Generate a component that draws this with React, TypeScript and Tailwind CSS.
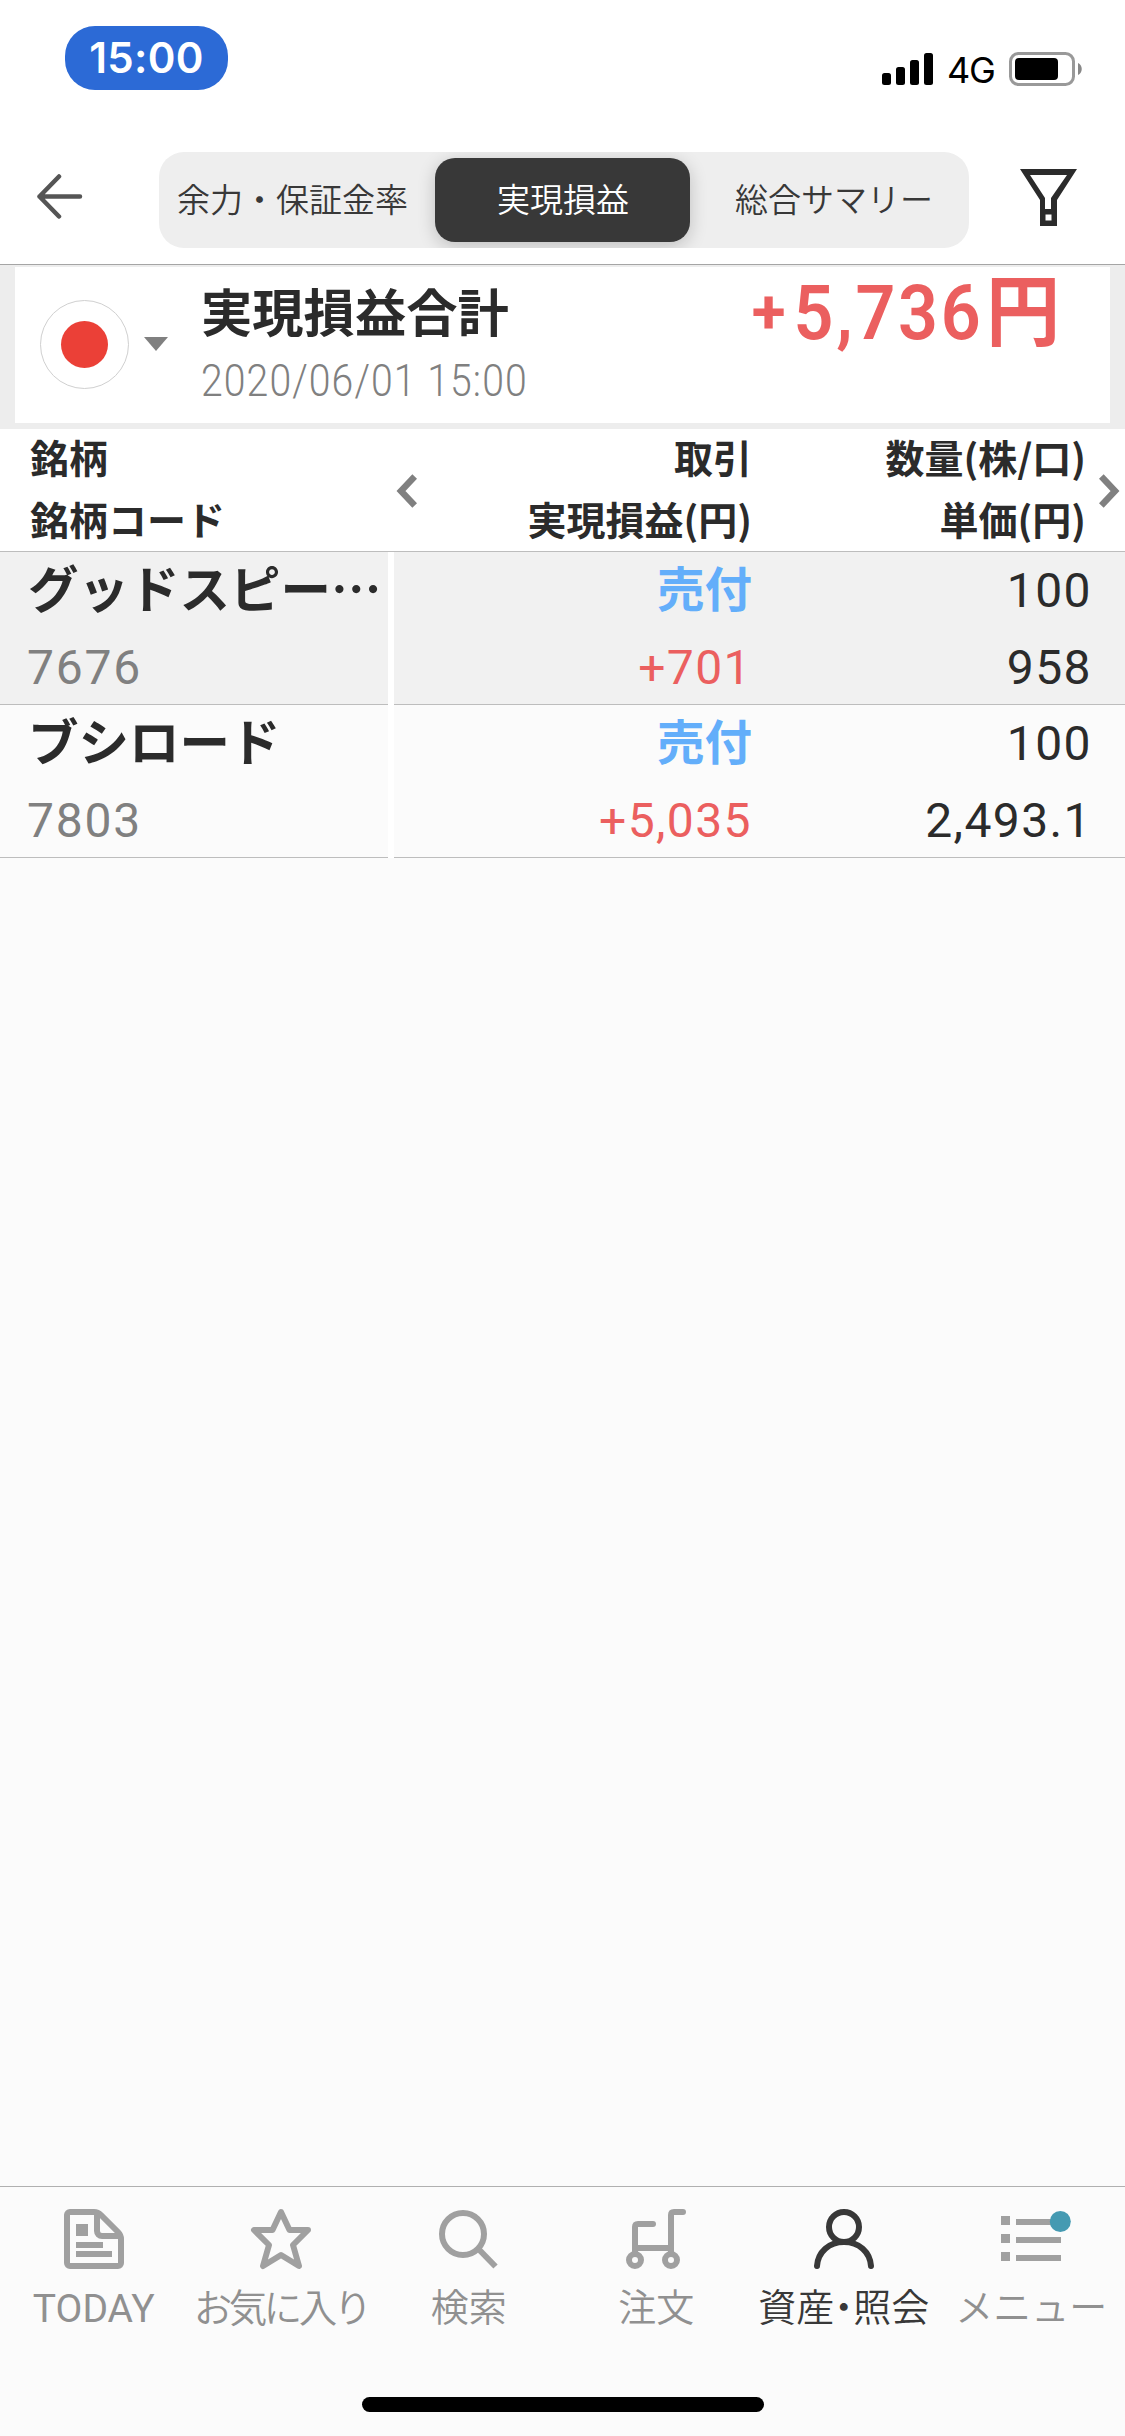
import type { ReactNode } from "react";

type Trade = {
  name: string;
  code: string;
  side: string;
  profit: string;
  quantity: string;
  price: string;
};

const trades: Trade[] = [
  { name: "グッドスピー…", code: "7676", side: "売付", profit: "+701", quantity: "100", price: "958" },
  { name: "ブシロード", code: "7803", side: "売付", profit: "+5,035", quantity: "100", price: "2,493.1" },
];

function StatusBar() {
  return (
    <div className="flex h-[152px] shrink-0 items-start justify-between pl-[65px] pr-[43px]">
      <div className="mt-[26px] flex h-16 w-[163px] items-center justify-center rounded-[30px] bg-[#2c6ad6] font-['Inter'] text-[42px] font-[560] leading-none tracking-[0.3px] text-white">
        15:00
      </div>
      <div className="mt-[52px] flex items-start">
        <svg width="52" height="34" viewBox="0 0 52 34" className="mr-[13px]">
          <rect x="0" y="21" width="9" height="12" rx="2.5" />
          <rect x="14" y="15" width="9" height="18" rx="2.5" />
          <rect x="28" y="8" width="9" height="25" rx="2.5" />
          <rect x="42" y="1" width="9" height="32" rx="2.5" />
        </svg>
        <span className="w-[62px] font-['Inter'] text-[36px] leading-[36px] tracking-[-1.2px] text-black">4G</span>
        <svg width="73" height="34" viewBox="0 0 73 34">
          <rect x="1.5" y="1.5" width="63" height="31" rx="8" fill="none" stroke="#999" strokeWidth="3" />
          <rect x="6" y="6" width="43" height="22" rx="4" />
          <path d="M69 11c5 2 5 10 0 12z" fill="#888" />
        </svg>
      </div>
    </div>
  );
}

function Toolbar() {
  return (
    <div className="flex h-[112px] shrink-0 items-start pl-[37px]">
      <svg width="46" height="46" viewBox="0 0 46 46" className="mt-[21px]" fill="none" stroke="#555" strokeWidth="4.5" strokeLinecap="round" strokeLinejoin="round">
        <path d="M22 3.500 2.500 23.500l19.500 20M2.500 23.500h40.500" />
      </svg>
      <div className="ml-[76px] flex h-24 w-[810px] items-center overflow-hidden rounded-[25px] bg-[#eee] text-[33px] font-[350] text-[#383838]">
        <div className="w-[276px] pb-1 pl-[18px] leading-none">余力・保証金率</div>
        <div className="flex h-[84px] w-[255px] items-center justify-center rounded-[20px] bg-[#383838] pb-1 pl-px leading-none text-white shadow-[0_4px_18px_rgba(0,0,0,0.2)]">
          実現損益
        </div>
        <div className="pb-1 pl-[45px] leading-none">総合サマリー</div>
      </div>
      <svg width="58" height="58" viewBox="0 0 58 58" className="ml-[51px] mt-[17px]" fill="#2b2b2b">
        <path fillRule="evenodd" d="M0 0H57L37 31V57H20V31ZM10 6 25 29V40H31V29L47 6ZM25.500 45.500V51.500H31.500V45.500Z" />
      </svg>
    </div>
  );
}

function Summary() {
  return (
    <div className="h-[165px] shrink-0 border-t border-[#a5a5a5] bg-[#ededed] px-[15px] pt-[2px]">
      <div className="flex h-[156px] bg-white pl-[25px]">
        <div className="mt-[33px] flex size-[89px] items-center justify-center rounded-full border border-[#d0d0d0]">
          <div className="size-[47px] rounded-full bg-[#eb4037]" />
        </div>
        <svg width="24" height="14" viewBox="0 0 24 14" className="ml-[15px] mt-[70px]">
          <path d="M0 0h24L12 14z" fill="#808080" />
        </svg>
        <div className="ml-[33px] w-[400px]">
          <div className="mt-[17px] text-[51.300px] font-bold leading-[52px]">実現損益合計</div>
          <div className="mt-[24px] origin-left scale-x-[0.9] whitespace-nowrap font-['Roboto'] text-[43.5px] font-light leading-[44px] tracking-[1.2px] text-[#808080]">
            2020/06/01 15:00
          </div>
        </div>
        <div className="ml-auto mr-[50px] flex items-start text-[#eb5f5f]">
          <span className="mt-[7px] font-['Roboto'] text-[62px] font-bold leading-[76px]">+</span>
          <span className="ml-[-8px] mt-[8px] origin-right scale-x-[0.92] font-['Roboto'] text-[76px] font-semibold leading-[76px] tracking-[3px]">5,736</span>
          <span className="ml-[-2px] mt-px origin-right scale-x-[0.95] text-[78px] font-bold leading-[77px]">円</span>
        </div>
      </div>
    </div>
  );
}

function Chevron({ right = false }: { right?: boolean }) {
  return (
    <svg width="21" height="34" viewBox="0 0 21 34" fill="none" stroke="#808080" strokeWidth="6.500" className="mt-[45px] shrink-0">
      {right ? <path d="M2.300 2.500 16 17 2.300 31.500" /> : <path d="M18.700 2.500 5 17 18.700 31.500" />}
    </svg>
  );
}

function TableHeader() {
  return (
    <div className="h-[123px] shrink-0 border-b border-[#bdbdbd] bg-white">
      <div className="flex text-[39px] font-bold leading-[62px] whitespace-nowrap">
        <div className="mt-[-4px] w-[396px] pl-[30px]">
          <div>銘柄</div>
          <div>銘柄コード</div>
        </div>
        <Chevron />
        <div className="mt-[-4px] w-[335px] text-right">
          <div>取引</div>
          <div>実現損益(円)</div>
        </div>
        <div className="mt-[-4px] w-[334px] text-right">
          <div>数量(株/口)</div>
          <div>単価(円)</div>
        </div>
        <div className="ml-[13px]">
          <Chevron right />
        </div>
      </div>
    </div>
  );
}

function TradeRow({ trade, shaded }: { trade: Trade; shaded: boolean }) {
  const cell = shaded ? "bg-[#f1f1f1]" : "bg-[#fbfbfb]";
  return (
    <div className="flex h-[153px] shrink-0 gap-[6px] bg-white whitespace-nowrap">
      <div className={`w-[388px] border-b border-[#bdbdbd] ${cell}`}>
        <div className="mt-[-2px] pl-[28px] text-[50.500px] font-bold leading-[72px]">{trade.name}</div>
        <div className="mt-[10px] pl-[27px] font-['Roboto'] text-[48px] leading-[72px] tracking-[1.8px] text-[#808080]">{trade.code}</div>
      </div>
      <div className={`flex flex-1 border-b border-[#bdbdbd] ${cell}`}>
        <div className="w-[358px] text-right">
          <div className="mt-[-3px] text-[47.500px] font-bold leading-[76px] text-[#63aefa]">{trade.side}</div>
          <div className="mt-[7px] font-['Roboto'] text-[48px] leading-[72px] tracking-[1.4px] text-[#eb5f5f]">{trade.profit}</div>
        </div>
        <div className="w-[340px] pt-[3px] text-right font-['Roboto'] text-[48px] leading-[72px] tracking-[1.4px]">
          <div>{trade.quantity}</div>
          <div className="mt-[5px]">{trade.price}</div>
        </div>
      </div>
    </div>
  );
}

function IconFrame({ children }: { children: ReactNode }) {
  return (
    <svg width="72" height="62" viewBox="-6 -1 72 62" fill="none" stroke="currentColor" strokeWidth="6" className="overflow-visible">
      {children}
    </svg>
  );
}

function TodayIcon() {
  return (
    <IconFrame>
      <path d="M30 3H6a3 3 0 0 0-3 3v48a3 3 0 0 0 3 3h48a3 3 0 0 0 3-3V30q0-4-3-7L37 6q-3-3-7-3z" />
      <path d="M33 4v18a5 5 0 0 0 5 5h18" />
      <path d="M12 15h12v12H12zM12 33h27v6H12zM12 42h36v6H12z" fill="currentColor" stroke="none" />
    </IconFrame>
  );
}

function StarIcon() {
  return (
    <IconFrame>
      <path strokeLinejoin="round" d="M30 3 38.500 21H57L42 36l6 21-18-11-18 11 6-21L3 21h18.500z" />
    </IconFrame>
  );
}

function SearchIcon() {
  return (
    <IconFrame>
      <circle cx="24" cy="25" r="21" />
      <path d="m39 39.500 17.500 18" />
    </IconFrame>
  );
}

function CartIcon() {
  return (
    <IconFrame>
      <circle cx="9" cy="51" r="6" />
      <circle cx="45" cy="51" r="6" />
      <path strokeLinecap="round" d="M27 15H12q-3 0-3 3v25M57 3h-9q-3 0-3 3v37M9 39h36" />
    </IconFrame>
  );
}

function PersonIcon() {
  return (
    <IconFrame>
      <circle cx="30" cy="18" r="15" />
      <path strokeLinecap="round" d="M3 57C4 43 15 33 30 33s26 10 27 24" />
    </IconFrame>
  );
}

function MenuIcon() {
  return (
    <IconFrame>
      <path d="M0 7h9v9H0zM0 25h9v9H0zM0 43h9v9H0zM15 10h45v6H15zM15 28h45v6H15zM15 46h45v6H15z" fill="currentColor" stroke="none" />
      <circle cx="59.300" cy="12.500" r="10.500" fill="#459ab2" stroke="none" />
    </IconFrame>
  );
}

const tabs: { label: string; icon: ReactNode; labelClass: string; active?: boolean }[] = [
  { label: "TODAY", icon: <TodayIcon />, labelClass: "mt-[19px] font-['Roboto'] text-[39px] font-normal" },
  { label: "お気に入り", icon: <StarIcon />, labelClass: "mt-[15px] text-[38.500px] tracking-[-3.5px] font-[350]" },
  { label: "検索", icon: <SearchIcon />, labelClass: "mt-[15px] text-[38px] font-[350]" },
  { label: "注文", icon: <CartIcon />, labelClass: "mt-[15px] text-[38px] font-[350]" },
  { label: "資産・照会", icon: <PersonIcon />, labelClass: "mt-[15px] text-[38px] font-[350] [font-feature-settings:'palt']", active: true },
  { label: "メニュー", icon: <MenuIcon />, labelClass: "mt-[15px] text-[38px] font-[350]" },
];

function TabBar() {
  return (
    <div className="shrink-0 border-t border-[#b0b0b0] bg-[#fbfbfb]">
      <div className="grid h-[210px] grid-cols-6 pt-[21px]">
        {tabs.map((tab) => (
          <div key={tab.label} className={`flex flex-col items-center ${tab.active ? "text-[#383838]" : "text-[#a0a0a0]"}`}>
            {tab.icon}
            <span className={`whitespace-nowrap leading-[40px] ${tab.labelClass} ${tab.active ? "text-[#383838]" : "text-[#909090]"}`}>
              {tab.label}
            </span>
          </div>
        ))}
      </div>
      <div className="flex h-[39px] justify-center">
        <div className="h-[15px] w-[402px] rounded-full bg-black" />
      </div>
    </div>
  );
}

export default function App() {
  return (
    <div className="flex h-[2436px] w-[1125px] flex-col overflow-hidden bg-white font-['Noto_Sans_CJK_JP',sans-serif] text-[#2b2b2b]">
      <StatusBar />
      <Toolbar />
      <Summary />
      <TableHeader />
      {trades.map((trade, index) => (
        <TradeRow key={trade.code} trade={trade} shaded={index % 2 === 0} />
      ))}
      <div className="flex-1 bg-[#fbfbfb]" />
      <TabBar />
    </div>
  );
}
